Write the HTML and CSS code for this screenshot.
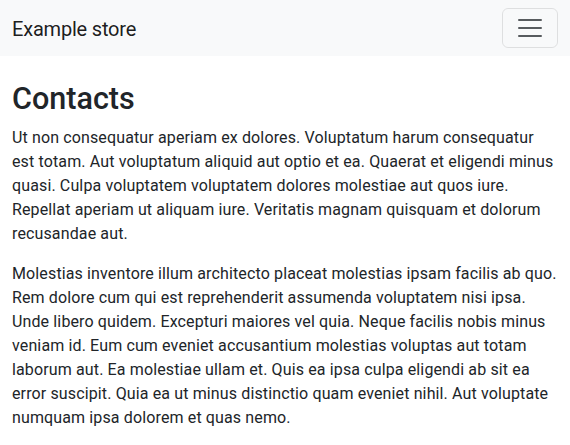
FILE: index.html
```html
<!DOCTYPE html>
<html lang="en">
<head>
<meta charset="utf-8">
<title>Contacts</title>
<link rel="stylesheet" href="styles.css">
</head>
<body>
<nav class="navbar">
  <div class="navbar-inner">
    <a class="brand" href="#">Example store</a>
    <button class="toggler" type="button" aria-label="Toggle navigation">
      <svg class="toggler-icon" width="30" height="30" viewBox="0 0 30 30" aria-hidden="true">
        <path stroke="rgba(33,37,41,0.75)" stroke-linecap="round" stroke-miterlimit="10" stroke-width="2" d="M4 7h22M4 15h22M4 23h22"/>
      </svg>
    </button>
  </div>
</nav>
<main class="content">
  <h1 class="title">Contacts</h1>
  <p>Ut non consequatur aperiam ex dolores. Voluptatum harum consequatur est totam. Aut voluptatum aliquid aut optio et ea. Quaerat et eligendi minus quasi. Culpa voluptatem voluptatem dolores molestiae aut quos iure. Repellat aperiam ut aliquam iure. Veritatis magnam quisquam et dolorum recusandae aut.</p>
  <p>Molestias inventore illum architecto placeat molestias ipsam facilis ab quo. Rem dolore cum qui est reprehenderit assumenda voluptatem nisi ipsa. Unde libero quidem. Excepturi maiores vel quia. Neque facilis nobis minus veniam id. Eum cum eveniet accusantium molestias voluptas aut totam laborum aut. Ea molestiae ullam et. Quis ea ipsa culpa eligendi ab sit ea error suscipit. Quia ea ut minus distinctio quam eveniet nihil. Aut voluptate numquam ipsa dolorem et quas nemo.</p>
</main>
</body>
</html>
```
FILE: styles.css
```css
* { box-sizing: border-box; }
html, body { margin: 0; }
body {
  font-family: Roboto, "Noto Sans", sans-serif;
  font-size: 16px;
  line-height: 1.5;
  color: #212529;
  background: #fff;
}
.navbar {
  background: #f8f9fa;
  padding: 8px 0;
}
.navbar-inner {
  display: flex;
  align-items: center;
  justify-content: space-between;
  padding: 0 12px;
}
.brand {
  font-size: 20px;
  line-height: 30px;
  padding: 6px 0 4px;
  color: rgba(0,0,0,0.9);
  text-decoration: none;
  letter-spacing: -0.2px;
}
.toggler {
  display: flex;
  align-items: center;
  justify-content: center;
  padding: 4px 12px;
  background: transparent;
  border: 1px solid rgba(0,0,0,0.1);
  border-radius: 6px;
  line-height: 1;
}
.toggler-icon { display: block; }
.content {
  padding: 25px 12px 0;
}
.title {
  margin: 0 0 8px;
  font-size: 30.55px;
  font-weight: 500;
  line-height: 1.2;
}
p {
  margin: 0 0 16px;
  letter-spacing: 0.13px;
}
```
